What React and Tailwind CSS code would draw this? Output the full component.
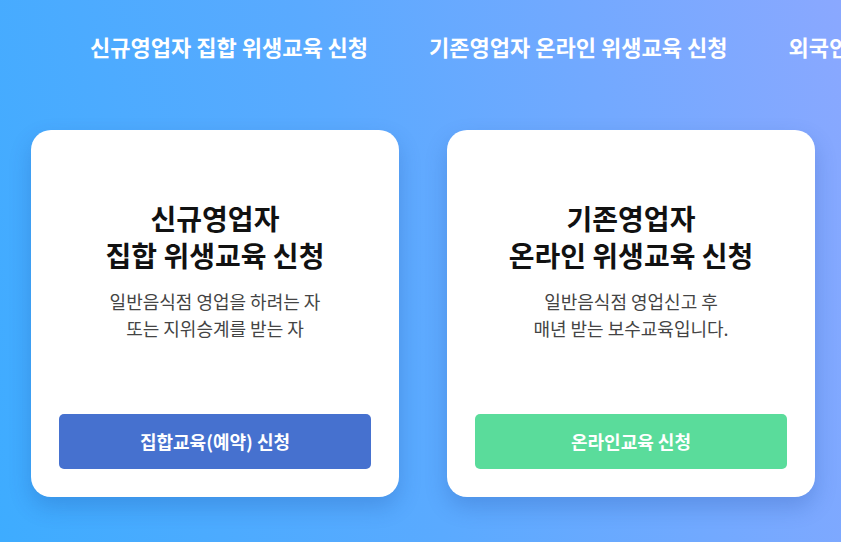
const tabs = [
  "신규영업자 집합 위생교육 신청",
  "기존영업자 온라인 위생교육 신청",
  "외국인 영업자 위생교육 신청",
];

const cards = [
  {
    title: ["신규영업자", "집합 위생교육 신청"],
    desc: ["일반음식점 영업을 하려는 자", "또는 지위승계를 받는 자"],
    button: "집합교육(예약) 신청",
    color: "bg-[#4671cf]",
  },
  {
    title: ["기존영업자", "온라인 위생교육 신청"],
    desc: ["일반음식점 영업신고 후", "매년 받는 보수교육입니다."],
    button: "온라인교육 신청",
    color: "bg-[#5adc9b]",
  },
];

function Card({ card }) {
  return (
    <div className="flex h-[367px] w-[368px] shrink-0 flex-col rounded-[20px] bg-white px-7 pb-7 pt-[70px] text-center shadow-[0_10px_22px_rgba(20,60,140,0.22)]">
      <h2 className="text-[28px] font-bold leading-[37px] text-[#111]">
        {card.title[0]}
        <br />
        {card.title[1]}
      </h2>
      <p className="mt-[14px] text-[18px] leading-[27px] text-[#444]">
        {card.desc[0]}
        <br />
        {card.desc[1]}
      </p>
      <button
        className={`mt-auto h-[55px] w-full rounded-[5px] ${card.color} text-[18px] font-bold text-white`}
      >
        {card.button}
      </button>
    </div>
  );
}

export default function App() {
  return (
    <div className="h-[542px] w-[841px] overflow-hidden bg-[linear-gradient(75deg,#3eacff_0%,#5aaaff_45%,#8aa8ff_100%)] font-['Noto_Sans_CJK_KR','Noto_Sans',sans-serif]">
      <nav className="flex gap-[61px] whitespace-nowrap pl-[90px] pt-8">
        {tabs.map((t) => (
          <span key={t} className="text-[22px] font-bold leading-7 text-white">
            {t}
          </span>
        ))}
      </nav>
      <div className="mt-[70px] flex gap-12 pl-[31px]">
        {cards.map((c) => (
          <Card key={c.button} card={c} />
        ))}
      </div>
    </div>
  );
}
